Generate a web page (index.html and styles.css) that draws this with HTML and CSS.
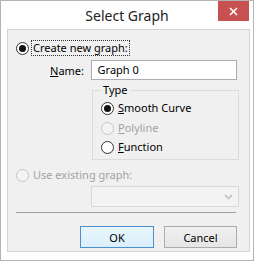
FILE: index.html
```html
<!DOCTYPE html>
<html lang="en">
<head>
    <meta charset="UTF-8">
    <title>Select Graph</title>
    <link rel="stylesheet" href="styles.css">
</head>
<body>
    <div class="window">
        <div class="titlebar">
            <span></span>
            <div class="title">Select Graph</div>
            <button class="close">
                <svg width="9" height="9" viewBox="0 0 9 9"><path d="M1 1 L8 8 M8 1 L1 8" stroke="#fff" stroke-width="1.6"/></svg>
            </button>
        </div>

        <div class="client">
            <div class="row">
                <span class="radio checked"></span>
                <span class="label focus">Create new graph:</span>
            </div>

            <div class="name-row">
                <span class="name-label"><u>N</u>ame:</span>
                <div class="textbox">Graph 0</div>
            </div>

            <fieldset class="group">
                <legend>Type</legend>
                <div class="row">
                    <span class="radio checked"></span>
                    <span class="label"><u>S</u>mooth Curve</span>
                </div>
                <div class="row disabled">
                    <span class="radio"></span>
                    <span class="label"><u>P</u>olyline</span>
                </div>
                <div class="row">
                    <span class="radio"></span>
                    <span class="label"><u>F</u>unction</span>
                </div>
            </fieldset>

            <div class="row disabled existing">
                <span class="radio"></span>
                <span class="label">Use existing graph:</span>
            </div>

            <div class="combo">
                <svg width="9" height="6" viewBox="0 0 9 6"><path d="M1 1 L4.5 4.5 L8 1" fill="none" stroke="#bdbdbd" stroke-width="1.5"/></svg>
            </div>

            <div class="separator"></div>

            <div class="buttons">
                <button class="btn default">OK</button>
                <button class="btn">Cancel</button>
            </div>
        </div>
    </div>
</body>
</html>
```

FILE: styles.css
```css
body {
    margin: 0;
    background: #fff;
    font-family: "Noto Sans", "Open Sans", sans-serif;
    font-size: 11px;
    color: #000;
}

.window {
    width: 252px;
    height: 259px;
    border: 1px solid #b4b4b4;
    background: #fff;
}

.titlebar {
    height: 28px;
    display: grid;
    grid-template-columns: 1fr auto 1fr;
}

.title {
    font-size: 14px;
    line-height: 29px;
    color: #222;
}

.close {
    justify-self: end;
    width: 31px;
    height: 20px;
    margin-right: 4px;
    padding: 0;
    border: none;
    background: #c75050;
    display: flex;
    align-items: center;
    justify-content: center;
}

.client {
    margin: 0 3px 0 6px;
    height: 223px;
    border: 1px solid #d3d3d3;
    background: #f0f0f0;
    padding: 10px 12px 0 8px;
    box-sizing: border-box;
}

.row {
    display: flex;
    align-items: center;
    height: 16px;
}

.radio {
    width: 11px;
    height: 11px;
    border: 1px solid #333;
    border-radius: 50%;
    background: #fff;
    display: flex;
    align-items: center;
    justify-content: center;
    margin-right: 2px;
}

.radio.checked::after {
    content: "";
    width: 7px;
    height: 7px;
    border-radius: 50%;
    background: #111;
}

.label {
    padding: 0 1px;
    line-height: 14px;
    border: 1px solid transparent;
}

.label.focus {
    border: 1px dotted #333;
}

.disabled .radio {
    border-color: #c6c6c6;
    background: #f4f4f4;
}

.disabled .label {
    color: #a3a3a3;
}

.name-row {
    display: flex;
    align-items: center;
    margin-top: 4px;
    height: 20px;
}

.name-label {
    width: 41px;
    padding-left: 34px;
}

.textbox {
    width: 140px;
    height: 18px;
    border: 1px solid #abadb3;
    background: #fff;
    padding-left: 6px;
    line-height: 18px;
}

.group {
    margin: 2px 0 0 76px;
    width: 147px;
    box-sizing: border-box;
    padding: 0 0 3px 8px;
    border: 1px solid #dcdcdc;
}

.group legend {
    padding: 0 3px 0 2px;
    line-height: 16px;
}

.group .row {
    height: 20px;
}

.group .row:last-child {
    height: 18px;
}

.existing {
    margin-top: 7px;
}

.combo {
    margin: 3px 0 0 75px;
    width: 148px;
    height: 21px;
    box-sizing: border-box;
    border: 1px solid #d9d9d9;
    background: #f3f3f3;
    display: flex;
    align-items: center;
    justify-content: flex-end;
    padding-right: 5px;
}

.separator {
    margin-top: 5px;
    width: 220px;
    height: 1px;
    background: #a0a0a0;
}

.buttons {
    display: flex;
    justify-content: flex-end;
    gap: 10px;
    margin-top: 13px;
}

.btn {
    width: 73px;
    height: 22px;
    padding: 0;
    font-family: inherit;
    font-size: 11px;
    color: #000;
    border: 1px solid #acacac;
    background: linear-gradient(#f0f0f0, #e5e5e5);
}

.btn.default {
    width: 74px;
    border-color: #4a90d0;
    background: linear-gradient(#eaf6fd, #d9f0fc);
}
```
